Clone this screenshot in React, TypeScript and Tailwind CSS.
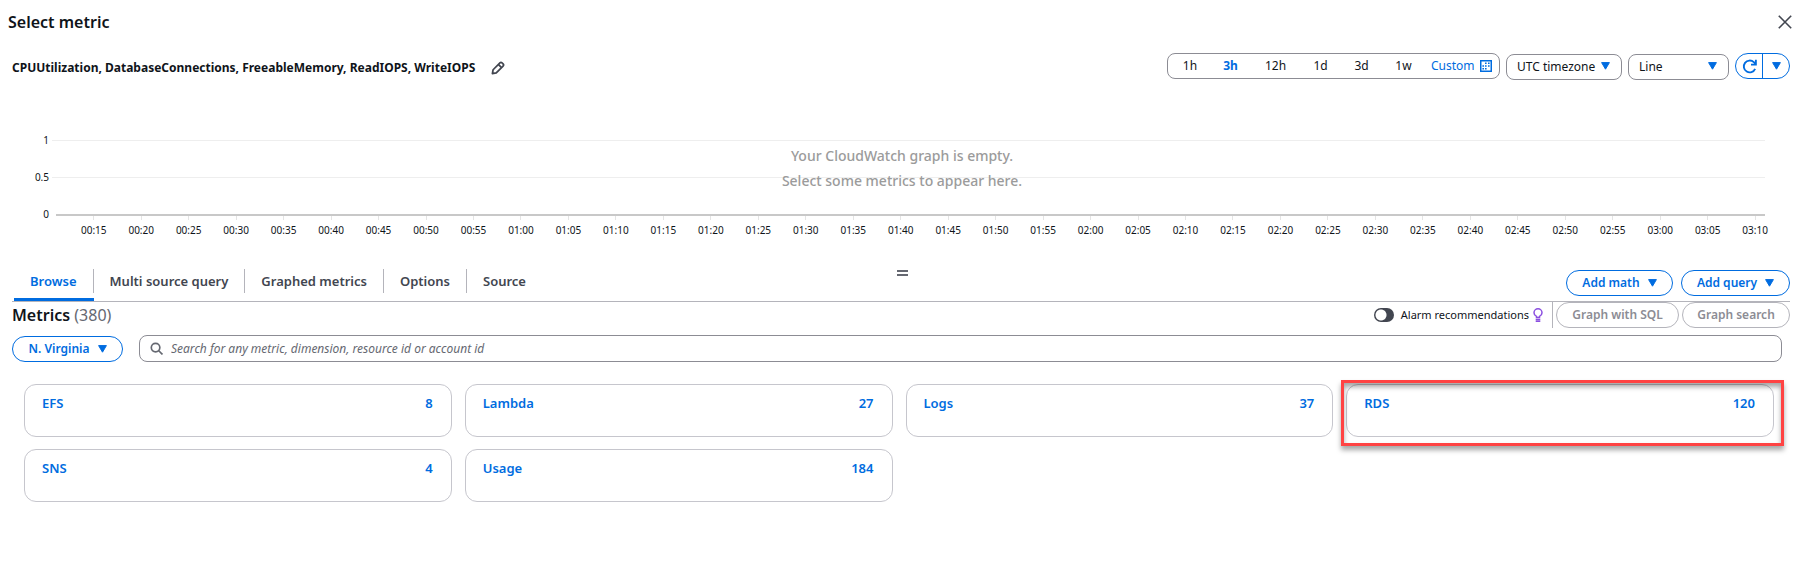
import React from "react";

const FONT = "font-['Noto_Sans','Open_Sans',sans-serif]";

const ranges = [
  { label: "1h", w: "w-[44px]" },
  { label: "3h", w: "w-[37px]" },
  { label: "12h", w: "w-[53px]" },
  { label: "1d", w: "w-[37px]" },
  { label: "3d", w: "w-[45px]" },
  { label: "1w", w: "w-[39px]" },
];

const tabs = ["Browse", "Multi source query", "Graphed metrics", "Options", "Source"];

const namespaces = [
  { name: "EFS", count: 8 },
  { name: "Lambda", count: 27 },
  { name: "Logs", count: 37 },
  { name: "RDS", count: 120, highlighted: true },
  { name: "SNS", count: 4 },
  { name: "Usage", count: 184 },
];

const times = Array.from({ length: 36 }, (_, i) => {
  const minutes = 15 + i * 5;
  const h = String(Math.floor(minutes / 60)).padStart(2, "0");
  const m = String(minutes % 60).padStart(2, "0");
  return `${h}:${m}`;
});

function Caret({ className = "" }: { className?: string }) {
  return (
    <svg viewBox="0 0 9 8" className={`h-2 w-[9px] shrink-0 ${className}`} aria-hidden="true">
      <path d="M.6.6h7.8L4.5 7.2z" fill="currentColor" stroke="currentColor" strokeLinejoin="round" />
    </svg>
  );
}

function Pencil() {
  return (
    <svg viewBox="0 0 16 16" className="size-[14px]" fill="none" stroke="#424650" strokeWidth="2" strokeLinejoin="round" aria-hidden="true">
      <path d="M10.2 2.2a1.7 1.7 0 0 1 2.4 0l1.2 1.2a1.7 1.7 0 0 1 0 2.4L6 13.6 1.6 14.4 2.4 10z" />
      <path d="M8.6 4.2l3.2 3.2" />
    </svg>
  );
}

function Calendar() {
  return (
    <svg viewBox="0 0 12 12" className="size-3" aria-hidden="true">
      <rect x="0.75" y="0.75" width="10.5" height="10.5" fill="none" stroke="#006ce0" strokeWidth="1.5" />
      <path
        d="M5 2.5h1.6v1.6H5zM8 2.5h1.6v1.6H8zM2.4 5.2H4v1.6H2.4zM5 5.2h1.6v1.6H5zM8 5.2h1.6v1.6H8zM2.4 8H4v1.6H2.4zM5 8h1.6v1.6H5z"
        fill="#006ce0"
      />
    </svg>
  );
}

function Refresh() {
  return (
    <svg viewBox="0 0 16 16" className="size-[15px]" fill="none" stroke="currentColor" strokeWidth="2" aria-hidden="true">
      <path d="M14 10.5A6.3 6.3 0 1 1 12.6 3.4L14.5 5.3" />
      <path d="M14.8.8v5.2H9.6" />
    </svg>
  );
}

function Bulb() {
  return (
    <svg viewBox="0 0 10 14" className="h-[14px] w-[10px]" fill="none" stroke="#8b4fe0" strokeWidth="1.5" aria-hidden="true">
      <path d="M3.5 9.6V8.4C2 7.7 1 6.4 1 4.8a4 4 0 0 1 8 0c0 1.6-1 2.9-2.5 3.6v1.2z" />
      <path d="M2.7 11.5h4.6M2.7 13.2h4.6" />
    </svg>
  );
}

function PillMenu({ label, className = "" }: { label: string; className?: string }) {
  return (
    <button
      type="button"
      className={`flex h-[26px] items-center justify-center gap-2 rounded-full border border-[#006ce0] text-xs font-semibold whitespace-nowrap text-[#006ce0] ${className}`}
    >
      {label}
      <Caret />
    </button>
  );
}

function SelectBox({ label, value, className }: { label: string; value: string; className: string }) {
  return (
    <div className={`relative h-[26px] ${className}`}>
      <select
        aria-label={label}
        className="size-full appearance-none rounded-lg border border-[#8c8c94] bg-white pl-[10px] text-xs text-[#0f141a]"
      >
        <option>{value}</option>
      </select>
      <Caret className="pointer-events-none absolute top-[9px] right-3 text-[#006ce0]" />
    </div>
  );
}

function Header() {
  return (
    <header className="flex h-11 items-center justify-between pr-3 pl-2">
      <h1 className="text-base font-semibold">Select metric</h1>
      <button type="button" aria-label="Close">
        <svg viewBox="0 0 14 14" className="size-[14px]" stroke="#424650" strokeWidth="1.6" aria-hidden="true">
          <path d="M.8.8l12.4 12.4M13.2.8L.8 13.2" />
        </svg>
      </button>
    </header>
  );
}

function GraphToolbar() {
  return (
    <div className="mt-[9px] flex h-[26px] items-center justify-between pr-[14px] pl-3">
      <div className="flex items-center gap-4 pt-1">
        <h2 className="text-xs font-bold">
          CPUUtilization, DatabaseConnections, FreeableMemory, ReadIOPS, WriteIOPS
        </h2>
        <button type="button" aria-label="Edit title">
          <Pencil />
        </button>
      </div>
      <div className="flex items-center gap-[6px]">
        <div className="flex h-[26px] w-[333px] items-center rounded-lg border border-[#8c8c94] text-xs">
          {ranges.map((r) => (
            <button
              key={r.label}
              type="button"
              className={`${r.w} ${r.label === "3h" ? "font-bold text-[#006ce0]" : ""}`}
            >
              {r.label}
            </button>
          ))}
          <button type="button" className="ml-2 flex flex-1 items-center justify-between pr-[7px] text-[#006ce0]">
            Custom
            <Calendar />
          </button>
        </div>
        <SelectBox label="Time zone" value="UTC timezone" className="w-[116px]" />
        <SelectBox label="Graph type" value="Line" className="w-[101px]" />
        <div className="flex h-[26px] w-[55px] rounded-full border border-[#006ce0] text-[#006ce0]">
          <button type="button" aria-label="Refresh" className="flex flex-1 items-center justify-center border-r border-[#006ce0]">
            <Refresh />
          </button>
          <button type="button" aria-label="Refresh options" className="flex flex-1 items-center justify-center">
            <Caret />
          </button>
        </div>
      </div>
    </div>
  );
}

function EmptyGraph() {
  return (
    <section className="pt-[51px] text-[10px] leading-5" aria-label="Graph">
      <div className="relative">
        <div className="flex pr-[39px]">
          <div className="flex w-[49px] flex-col gap-[17px] text-right">
            <span>1</span>
            <span>0.5</span>
            <span>0</span>
          </div>
          <div className="flex flex-1 flex-col pt-[10px] pl-[3px]">
            <div className="h-[37px] border-t border-[#eeeeee]" />
            <div className="h-[37px] border-t border-[#eeeeee]" />
            <div className="ml-1 border-t-2 border-[#c8c8c8]" />
          </div>
        </div>
        <div className="absolute inset-0 flex flex-col items-center pt-[13px] text-sm leading-[25px] font-medium text-[#9b9b9b]">
          <p>Your CloudWatch graph is empty.</p>
          <p>Select some metrics to appear here.</p>
        </div>
      </div>
      <div className="-mt-2 flex pr-[25px] pl-[70px]">
        {times.map((t) => (
          <div key={t} className="flex w-0 flex-1 flex-col items-center">
            <div className="h-1 w-px bg-[#e4e4e4]" />
            <span>{t}</span>
          </div>
        ))}
      </div>
    </section>
  );
}

function Tabs() {
  return (
    <div className="mr-[14px] ml-3 flex items-end justify-between border-b border-[#b4b4bb]">
      <div role="tablist" className="flex pl-[2px]">
        {tabs.map((t, i) => (
          <button
            key={t}
            type="button"
            role="tab"
            aria-selected={i === 0}
            className={`h-8 border-b-3 pb-[5px] text-[13px] leading-6 font-semibold ${
              i === 0 ? "border-[#006ce0] text-[#006ce0]" : "border-transparent text-[#424650]"
            }`}
          >
            <span className={`block px-4 ${i < tabs.length - 1 ? "border-r border-[#b4b4bb]" : ""}`}>{t}</span>
          </button>
        ))}
      </div>
      <div className="flex gap-2 pb-[5px]">
        <PillMenu label="Add math" className="w-[107px]" />
        <PillMenu label="Add query" className="w-[109px]" />
      </div>
    </div>
  );
}

function MetricsBar() {
  return (
    <div className="flex h-[26px] items-center justify-between pr-[14px] pl-3">
      <h2 className="text-base leading-[26px] font-semibold">
        Metrics <span className="font-normal text-[#656871]">(380)</span>
      </h2>
      <div className="flex items-center">
        <label className="flex items-center gap-[7px] text-[11px]">
          <input
            type="checkbox"
            role="switch"
            className="h-[14px] w-5 appearance-none rounded-full bg-[#424650] bg-[radial-gradient(circle_at_7px_7px,white_5px,transparent_6px)]"
          />
          Alarm recommendations
        </label>
        <span className="ml-1">
          <Bulb />
        </span>
        <div className="ml-[9px] flex h-[26px] gap-[3px] border-l border-[#b4b4bb] pl-[3px] text-xs font-semibold text-[#8c8c94]">
          <button type="button" disabled className="w-[123px] rounded-full border border-[#b4b4bb]">
            Graph with SQL
          </button>
          <button type="button" disabled className="w-[108px] rounded-full border border-[#b4b4bb]">
            Graph search
          </button>
        </div>
      </div>
    </div>
  );
}

function SearchBar() {
  return (
    <div className="mt-[7px] flex items-center gap-4 pr-[22px] pl-3">
      <PillMenu label="N. Virginia" className="w-[111px]" />
      <div className="flex h-[27px] flex-1 items-center gap-2 rounded-lg border border-[#8c8c94] pl-[10px]">
        <svg viewBox="0 0 14 14" className="size-[13px]" fill="none" stroke="#656871" strokeWidth="1.8" aria-hidden="true">
          <circle cx="6" cy="6" r="4.6" />
          <path d="M9.4 9.4l4 4" />
        </svg>
        <input
          type="text"
          aria-label="Search metrics"
          placeholder="Search for any metric, dimension, resource id or account id"
          className="flex-1 text-xs outline-none placeholder:text-[#656871] placeholder:italic"
        />
      </div>
    </div>
  );
}

function NamespaceGrid() {
  return (
    <div className="mt-[22px] grid grid-cols-4 gap-x-[13px] gap-y-3 pr-[30px] pl-6">
      {namespaces.map((n) => (
        <div key={n.name} className="relative">
          <a
            href={`#${n.name}`}
            className="flex h-[53px] justify-between rounded-xl border border-[#c6c6cd] pt-2 pr-[18px] pl-[17px] text-[13px] leading-5 font-semibold text-[#006ce0]"
          >
            <span>{n.name}</span>
            <span>{n.count}</span>
          </a>
          {n.highlighted && (
            <div className="pointer-events-none absolute -top-1 -right-[10px] -bottom-[9px] -left-[5px] border-3 border-[#ff4343] shadow-[0_4px_5px_rgba(0,0,0,0.35),inset_0_4px_5px_rgba(0,0,0,0.35)]" />
          )}
        </div>
      ))}
    </div>
  );
}

export default function App() {
  return (
    <main className={`${FONT} bg-white pb-8 text-[#0f141a]`}>
      <Header />
      <GraphToolbar />
      <EmptyGraph />
      <div className="flex h-[29px] items-end justify-center">
        <div className="-mb-[7px] h-[6px] w-[11px] border-y-2 border-[#656871]" role="separator" aria-label="Resize graph" />
      </div>
      <Tabs />
      <MetricsBar />
      <SearchBar />
      <NamespaceGrid />
    </main>
  );
}
